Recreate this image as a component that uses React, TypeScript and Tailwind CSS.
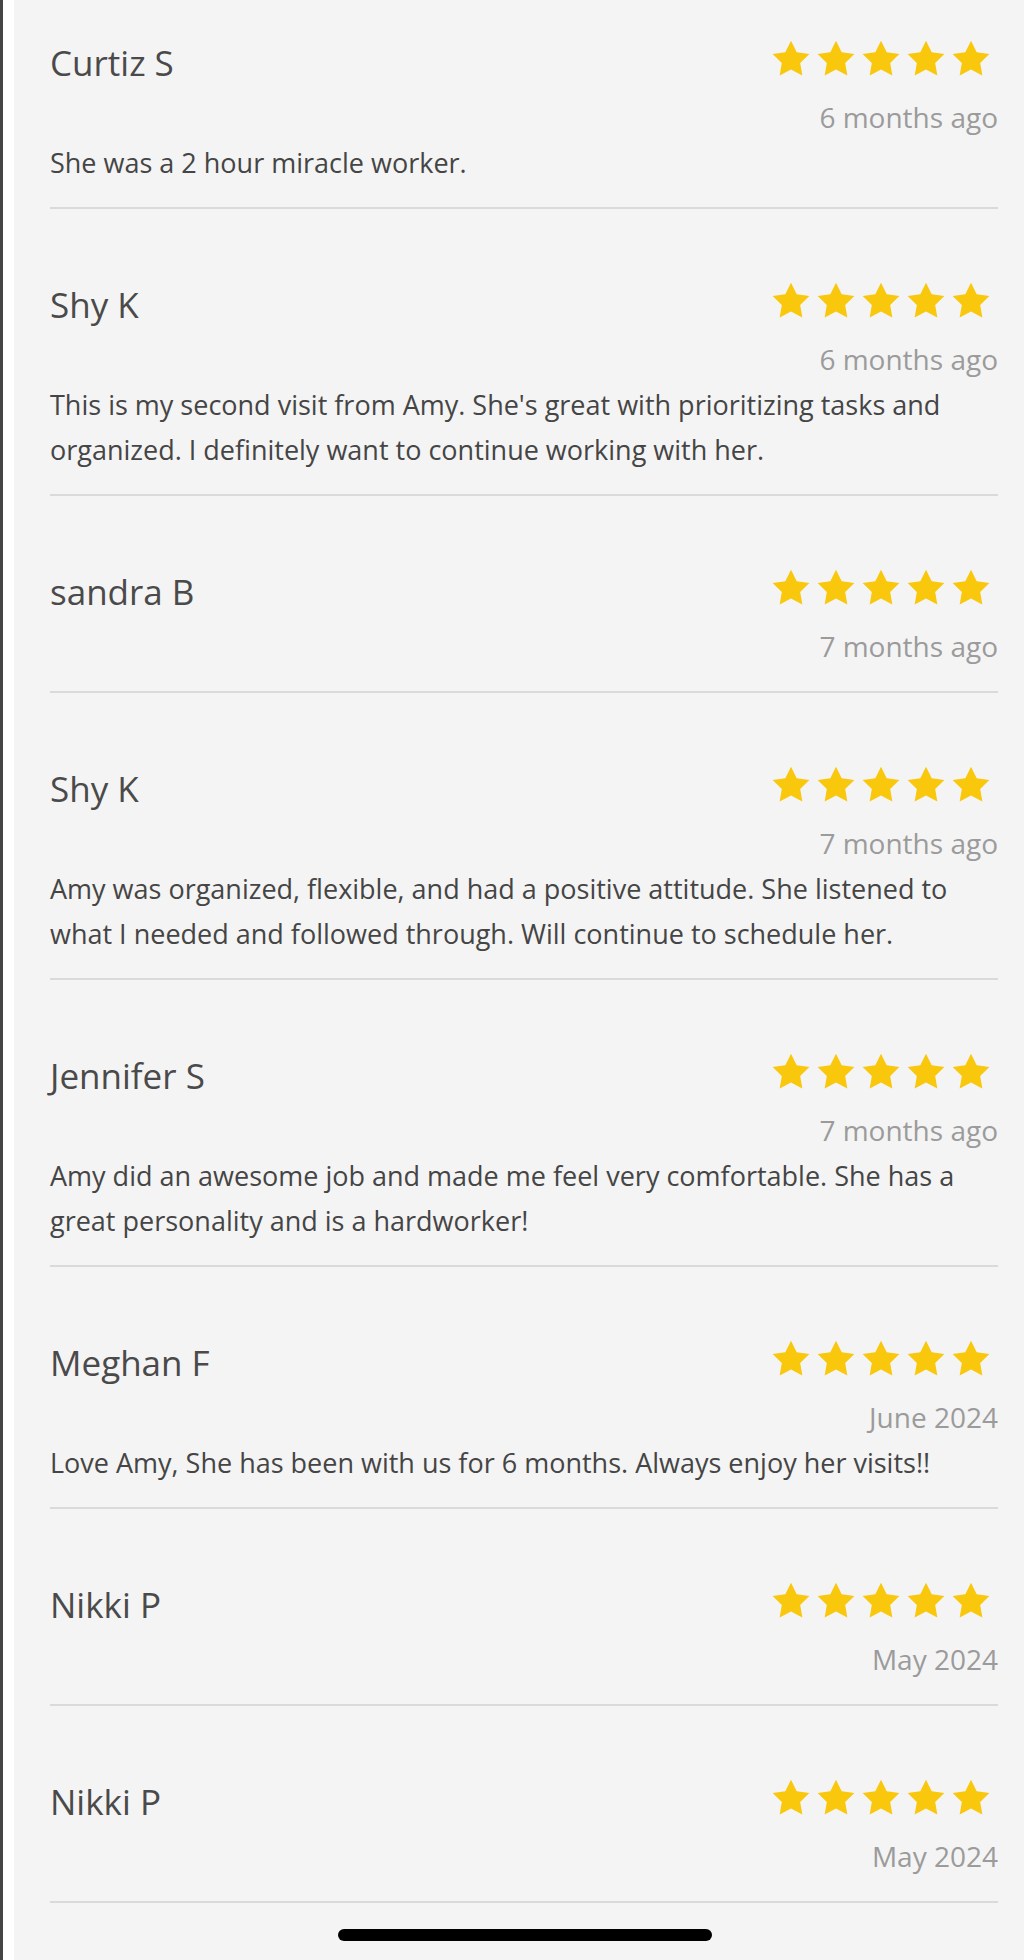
const reviews = [
  { name: "Curtiz S", date: "6 months ago", text: "She was a 2 hour miracle worker." },
  {
    name: "Shy K",
    date: "6 months ago",
    text: "This is my second visit from Amy. She's great with prioritizing tasks and organized. I definitely want to continue working with her.",
  },
  { name: "sandra B", date: "7 months ago", text: "" },
  {
    name: "Shy K",
    date: "7 months ago",
    text: "Amy was organized, flexible, and had a positive attitude. She listened to what I needed and followed through. Will continue to schedule her.",
  },
  {
    name: "Jennifer S",
    date: "7 months ago",
    text: "Amy did an awesome job and made me feel very comfortable. She has a great personality and is a hardworker!",
  },
  {
    name: "Meghan F",
    date: "June 2024",
    text: "Love Amy, She has been with us for 6 months. Always enjoy her visits!!",
  },
  { name: "Nikki P", date: "May 2024", text: "" },
  { name: "Nikki P", date: "May 2024", text: "" },
]

function Star() {
  return (
    <svg viewBox="0 0 24 24" className="w-[44px] h-[44px]">
      <path
        fill="#f9c70c"
        d="M12 2l3.09 6.26L22 9.27l-5 4.87 1.18 6.88L12 17.77l-6.18 3.25L7 14.14 2 9.27l6.91-1.01L12 2z"
      />
    </svg>
  )
}

function Review({ name, date, text, first }: { name: string; date: string; text: string; first: boolean }) {
  return (
    <div className={`${first ? "pt-[39px]" : "pt-[72px]"} ${text ? "pb-[22px]" : "pb-[25px]"} border-b-2 border-[#dadada]`}>
      <div className="flex items-center justify-between h-[48px]">
        <div className="text-[35px] leading-[48px] text-[#4a4a4a]">{name}</div>
        <div className="flex gap-[1px] mr-[5px] -mt-[8px]">
          <Star />
          <Star />
          <Star />
          <Star />
          <Star />
        </div>
      </div>
      <div className="mt-[10px] text-right text-[28px] leading-[40px] text-[#9b9b9b]">{date}</div>
      {text && <p className="mt-[3px] text-[27px] leading-[45px] text-[#454545]">{text}</p>}
    </div>
  )
}

export default function App() {
  return (
    <div className="relative min-h-[1960px] bg-[#f4f4f4] flex" style={{ fontFamily: '"Open Sans", "Noto Sans", sans-serif' }}>
      {/* frame edge */}
      <div className="w-[3px] bg-[#454545]" />
      <div className="w-[11px] bg-white" />
      <div className="flex-1 pl-[36px] pr-[26px]">
        {reviews.map((r, i) => (
          <Review key={i} {...r} first={i === 0} />
        ))}
      </div>

      {/* home indicator */}
      <div className="absolute left-[338px] top-[1929px] w-[374px] h-[12px] rounded-full bg-black" />
    </div>
  )
}
